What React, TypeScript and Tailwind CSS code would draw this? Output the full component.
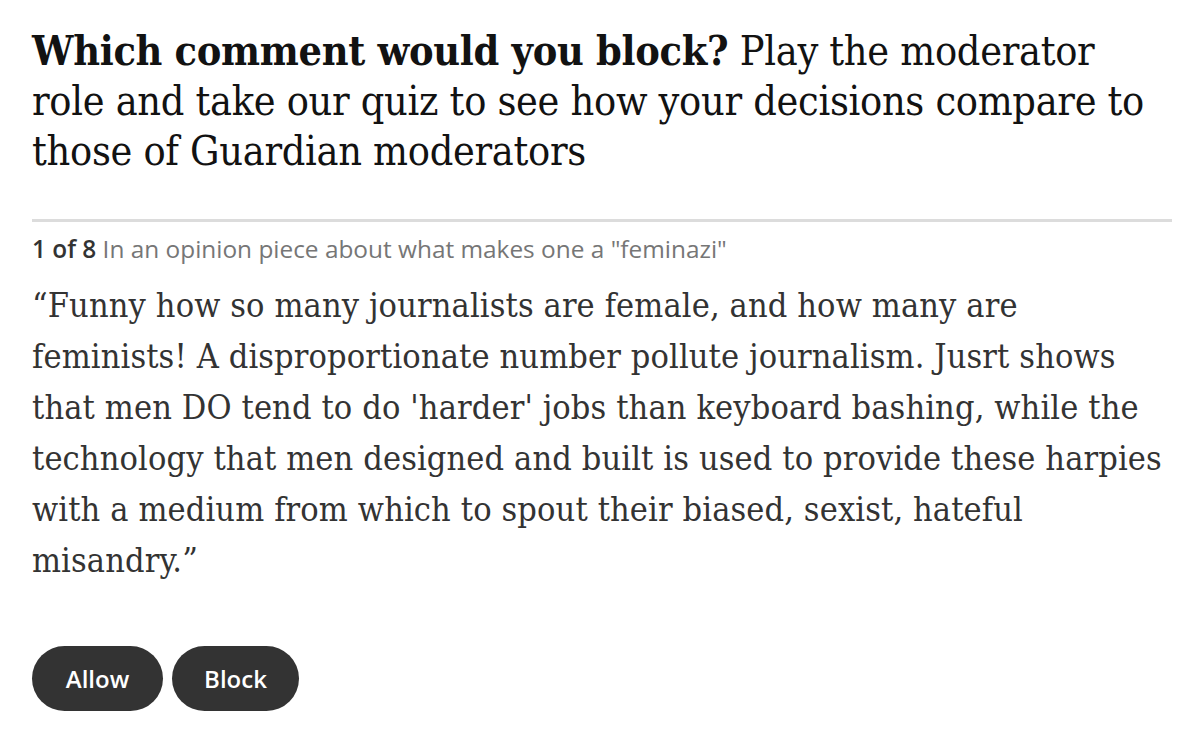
import React from 'react';

const serif = "font-['DejaVu_Serif_Condensed','DejaVu_Serif',serif]";
const sans = "font-['Open_Sans',sans-serif]";

export default function App() {
  return (
    <div className="min-h-[753px] w-[1200px] bg-white px-8 pt-[26px]">
      <h1 className={`${serif} text-[41px] leading-[50px] tracking-[-0.3px] text-[#121212]`}>
        <span className="font-bold">Which comment would you block?</span> Play the moderator
        <br />
        role and take our quiz to see how your decisions compare to
        <br />
        those of Guardian moderators
      </h1>

      <div className="mt-[43px] h-[3px] w-[1140px] bg-[#dcdcdc]" />

      <p className={`${sans} mt-[12px] text-[24.4px] leading-[30px] text-[#767676]`}>
        <span className="font-semibold text-[#333333]">1 of 8</span> In an opinion piece about what makes one a "feminazi"
      </p>

      <p className={`${serif} mt-[16px] text-[34px] leading-[51px] tracking-[0.12px] text-[#333333]`}>
        “Funny how so many journalists are female, and how many are
        <br />
        feminists! A disproportionate number pollute journalism. Jusrt shows
        <br />
        that men DO tend to do 'harder' jobs than keyboard bashing, while the
        <br />
        technology that men designed and built is used to provide these harpies
        <br />
        with a medium from which to spout their biased, sexist, hateful
        <br />
        misandry.”
      </p>

      <div className="mt-[60px] flex gap-[9px]">
        <button className={`${sans} h-[65px] w-[131px] rounded-full bg-[#333333] text-[24px] font-semibold text-white`}>
          Allow
        </button>
        <button className={`${sans} h-[65px] w-[127px] rounded-full bg-[#333333] text-[24px] font-semibold text-white`}>
          Block
        </button>
      </div>
    </div>
  );
}
